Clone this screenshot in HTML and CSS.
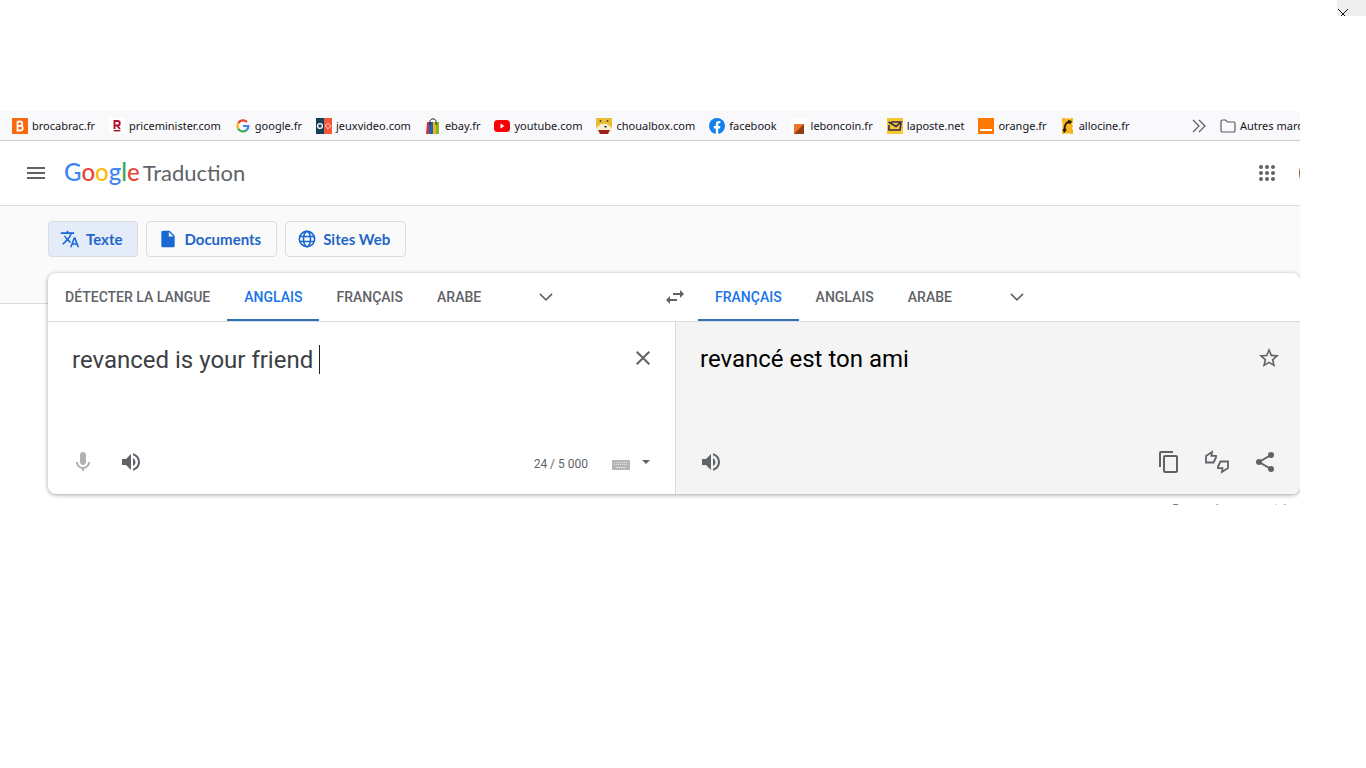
FILE: index.html
```html
<!DOCTYPE html>
<html lang="fr">
<head>
<meta charset="utf-8">
<title>Google Traduction</title>
<link rel="stylesheet" href="styles.css">
</head>
<body>
<button class="corner-close" aria-label="Fermer"><svg width="12" height="12" viewBox="0 0 12 12" fill="none" stroke="#111"><path d="M1 1l10 10M11 1L1 11"/></svg></button>
<div class="window">
  <nav class="bookmarks" aria-label="Marque-pages">
    <a href="#"><svg width="16" height="16" viewBox="0 0 16 16"><path fill="#f96a0e" d="M0 0h16v16H0z"/><path fill="none" stroke="#fff" stroke-width="1.8" d="M5.500 3.500v9h3a2.300 2.300 0 0 0 0-4.600h-3M5.500 3.500H8a2 2 0 0 1 0 4.400"/></svg>brocabrac.fr</a>
    <a href="#"><svg width="16" height="16" viewBox="0 0 16 16"><path fill="#fff" d="M0 0h16v16H0z"/><path fill="none" stroke="#b0102c" stroke-width="1.900" d="M5.500 11V3H8.500a2.200 2.200 0 0 1 0 4.500h-3M8 7.500l3 3.500"/><path fill="#b0102c" d="M4 12h8l-1.500 1.500h-5z"/></svg>priceminister.com</a>
    <a href="#"><svg width="16" height="16" viewBox="0 0 16 16" fill="none" stroke-width="2.200"><path stroke="#ea4335" d="M3.200 5.200A5.500 5.500 0 0 1 12 4"/><path stroke="#fbbc05" d="M3.200 5.200a5.500 5.500 0 0 0 0 5.600"/><path stroke="#34a853" d="M3.200 10.800a5.500 5.500 0 0 0 8.300 1.400"/><path stroke="#4285f4" d="M8 8h5.400a5.400 5.400 0 0 1-1.900 4.200"/></svg>google.fr</a>
    <a href="#"><svg width="16" height="16" viewBox="0 0 16 16"><path fill="#173f54" d="M0 0h8v16H0z"/><path fill="#f4573a" d="M8 0h8v16H8z"/><circle cx="4" cy="8" r="2.400" fill="none" stroke="#fff" stroke-width="1.300"/><path d="M12 5.200L14.800 8 12 10.800 9.200 8z" fill="none" stroke="#ffd5cd"/></svg>jeuxvideo.com</a>
    <a href="#"><svg width="16" height="16" viewBox="0 0 16 16"><path fill="#d63336" d="M2 4h3v12H1z"/><path fill="#1764bd" d="M4 4h4v12H4z"/><path fill="#f2b41b" d="M8 4h3v12H8z"/><path fill="#8ab320" d="M11 4h3v12h-3z"/><path d="M5 7V3.500C5 0 11 0 11 3.500V7" fill="none" stroke="#222"/></svg>ebay.fr</a>
    <a href="#"><svg width="16" height="16" viewBox="0 0 16 16"><rect y="2" width="16" height="12" rx="3.500" fill="#f40505"/><path fill="#fff" d="M6.500 5.500v5l4-2.500z"/></svg>youtube.com</a>
    <a href="#"><svg width="16" height="16" viewBox="0 0 16 16"><path fill="#e9bd37" d="M0 0h16v12H0z"/><circle cx="4.500" cy="3" r="1" fill="#5b4218"/><circle cx="11.500" cy="3" r="1" fill="#5b4218"/><path fill="#f9efcf" d="M0 10l5-4h6l5 4v3H0z"/><path fill="#222" d="M8 8h3l-1.500 2z"/><path fill="#9b2020" d="M2 12h12l-2 4H4z"/></svg>choualbox.com</a>
    <a href="#"><svg width="16" height="16" viewBox="0 0 16 16"><circle cx="8" cy="8" r="8" fill="#1281ee"/><path fill="#fff" d="M6.800 16v-5.500H4.800V8h2V6.300c0-2.200 1.200-3.300 3.100-3.300l1.500.2v2h-1c-1 0-1.200.6-1.200 1.200V8h2.200l-.4 2.500H9.200V16z"/></svg>facebook</a>
    <a href="#"><svg width="16" height="16" viewBox="0 0 16 16"><path fill="#fff" d="M0 0h16v16H0z"/><path fill="#ed762c" d="M3 6h10v10H3z"/><path fill="#8e4010" d="M13 6v10H3z"/></svg>leboncoin.fr</a>
    <a href="#"><svg width="16" height="16" viewBox="0 0 16 16"><path fill="#f5c82e" d="M0 0h16v16H0z"/><path fill="none" stroke="#342852" stroke-width="1.600" d="M1.500 4L9 8.500 14 4H4M2 7v5h11l1-7"/></svg>laposte.net</a>
    <a href="#"><svg width="16" height="16" viewBox="0 0 16 16"><path fill="#ff7900" d="M0 0h16v16H0z"/><path fill="#fff" d="M2 11h12v2H2z"/></svg>orange.fr</a>
    <a href="#"><svg width="14" height="16" viewBox="2 0 14 16"><path fill="#f4b51f" d="M3 0h3l1 1 2-1 1 1 2-1h2v4l-1 2 1 2-1 2 1 2v4h-3l-1-1-2 1-1-1-2 1H3v-4l1-2-1-2 1-2-1-2z"/><path d="M11 3.500C7 4 5 8 5.500 12.500" fill="none" stroke="#2a1a06" stroke-width="1.800"/><path d="M9 2l4 1-1.500 3-2-.5zM3.500 11l3.500-.5.500 2L5 15z" fill="#2a1a06"/></svg>allocine.fr</a>
    <button class="overflow" aria-label="Plus de marque-pages"><svg width="16" height="16" viewBox="0 0 16 16" fill="none" stroke="#5b5b66" stroke-width="1.200"><path d="M1 2l6 6-6 6M7 2l6 6-6 6"/></svg></button>
    <a class="others" href="#"><svg width="16" height="16" viewBox="0 0 16 16" fill="none" stroke="#5b5b66" stroke-width="1.200"><path d="M1 12.500v-9A1.500 1.500 0 0 1 2.500 2h3L7.500 4h6A1.500 1.500 0 0 1 15 5.500v7a1.500 1.500 0 0 1-1.500 1.500h-11A1.500 1.500 0 0 1 1 12.500z"/></svg>Autres marque-pages</a>
  </nav>
  <header class="header">
    <button class="icon" aria-label="Menu"><svg width="24" height="24" viewBox="0 0 24 24" fill="#5f6368"><path d="M3 18h18v-2H3zM3 13h18v-2H3zM3 6v2h18V6z"/></svg></button>
    <a class="brand" href="#"><span class="google"><span class="blue">G</span><span class="red">o</span><span class="yellow">o</span><span class="blue">g</span><span class="green">l</span><span class="red">e</span></span><span class="product">Traduction</span></a>
    <button class="icon apps" aria-label="Applications"><svg width="24" height="24" viewBox="0 0 24 24" fill="#5f6368"><circle cx="6" cy="6" r="2"/><circle cx="12" cy="6" r="2"/><circle cx="18" cy="6" r="2"/><circle cx="6" cy="12" r="2"/><circle cx="12" cy="12" r="2"/><circle cx="18" cy="12" r="2"/><circle cx="6" cy="18" r="2"/><circle cx="12" cy="18" r="2"/><circle cx="18" cy="18" r="2"/></svg></button>
    <button class="avatar" aria-label="Compte"></button>
  </header>
  <main>
    <div class="modes">
      <button class="chip active"><svg width="20" height="20" viewBox="0 0 24 24" fill="#1967d2"><path d="M12.870 15.070l-2.540-2.510.030-.030A17.520 17.520 0 0 0 14.070 6H17V4h-7V2H8v2H1v1.990h11.170C11.500 7.920 10.440 9.750 9 11.350 8.070 10.320 7.300 9.190 6.690 8h-2c.730 1.630 1.730 3.170 2.980 4.560l-5.090 5.020L4 19l5-5 3.110 3.110.760-2.040zM18.500 10h-2L12 22h2l1.120-3h4.750L21 22h2l-4.500-12zm-2.620 7l1.620-4.330L19.120 17h-3.240z"/></svg>Texte</button>
      <button class="chip"><svg width="20" height="20" viewBox="0 0 24 24" fill="#1967d2"><path d="M14 2H6c-1.100 0-2 .9-2 2v16c0 1.100.9 2 2 2h12c1.100 0 2-.9 2-2V8l-6-6zm-1 7V3.500L18.500 9H13z"/></svg>Documents</button>
      <button class="chip"><svg width="20" height="20" viewBox="0 0 24 24" fill="none" stroke="#1967d2" stroke-width="1.900"><circle cx="12" cy="12" r="9.200"/><ellipse cx="12" cy="12" rx="4.200" ry="9.200"/><path d="M3.500 9h17M3.500 15h17"/></svg>Sites Web</button>
    </div>
    <section class="card">
      <div class="pane source">
        <div class="langs">
          <button class="lang">DÉTECTER LA LANGUE</button><button class="lang on">ANGLAIS</button><button class="lang">FRANÇAIS</button><button class="lang">ARABE</button>
          <button class="icon more" aria-label="Plus de langues"><svg width="24" height="24" viewBox="0 0 24 24" fill="#5f6368"><path d="M5.410 7.590L4 9l8 8 8-8-1.410-1.410L12 14.170" transform="translate(2 2) scale(.83)"/></svg></button>
        </div>
        <div class="body">
          <div class="entry"><textarea rows="1" aria-label="Texte source" spellcheck="false">revanced is your friend </textarea><span class="caret"></span>
            <button class="icon end" aria-label="Effacer"><svg width="24" height="24" viewBox="0 0 24 24" fill="#5f6368"><path d="M19 6.410L17.590 5 12 10.590 6.410 5 5 6.410 10.590 12 5 17.590 6.410 19 12 13.410 17.590 19 19 17.590 13.410 12z"/></svg></button>
          </div>
          <div class="tools">
            <button class="icon" aria-label="Parler"><svg width="24" height="24" viewBox="0 0 24 24" fill="#b1b1b3"><path d="M12 15c1.660 0 3-1.340 3-3V5c0-1.660-1.340-3-3-3S9 3.340 9 5v7c0 1.660 1.340 3 3 3zm5-3c0 2.800-2.200 5-5 5s-5-2.200-5-5H5c0 3.500 2.600 6.300 6 6.900V21h2v-2.100c3.400-.6 6-3.400 6-6.900z"/></svg></button>
            <button class="icon" aria-label="Écouter"><svg width="24" height="24" viewBox="0 0 24 24" fill="#5f6368"><path d="M3 9v6h4l5 5V4L7 9zm13.500 3A4.500 4.500 0 0 0 14 7.970v8.050c1.480-.73 2.500-2.250 2.500-4.020zM14 3.230v2.060c2.890.86 5 3.540 5 6.710s-2.110 5.850-5 6.710v2.060c4.010-.91 7-4.490 7-8.770s-2.990-7.860-7-8.770z"/></svg></button>
            <span class="count">24 / 5 000</span>
            <button class="keyboard" aria-label="Clavier"><svg width="18" height="12" viewBox="0 0 18 12"><path fill="#b5b5b5" d="M0 1h18v10H0z"/><path stroke="#e4e4e4" stroke-dasharray="1 1" d="M2 3.500h14M2 5.500h14"/><path stroke="#ddd" d="M4 8.500h10"/></svg></button>
            <button class="drop" aria-label="Choisir un clavier"><svg width="8" height="8" viewBox="0 0 8 8"><path fill="#5f6368" d="M0 2h8L4 6z"/></svg></button>
          </div>
        </div>
      </div>
      <div class="pane target">
        <button class="icon swap" aria-label="Inverser les langues"><svg width="24" height="24" viewBox="0 0 24 24" fill="#5f6368"><path d="M6.990 11L3 15l3.990 4v-3H14v-2H6.990v-3zM21 9l-3.990-4v3H10v2h7.010v3L21 9z"/></svg></button>
        <div class="langs">
          <button class="lang on">FRANÇAIS</button><button class="lang">ANGLAIS</button><button class="lang">ARABE</button>
          <button class="icon more" aria-label="Plus de langues"><svg width="24" height="24" viewBox="0 0 24 24" fill="#5f6368"><path d="M5.410 7.590L4 9l8 8 8-8-1.410-1.410L12 14.170" transform="translate(2 2) scale(.83)"/></svg></button>
        </div>
        <div class="body">
          <div class="entry"><p class="result">revancé est ton ami</p>
            <button class="icon end" aria-label="Enregistrer"><svg width="24" height="24" viewBox="0 0 24 24" fill="#5f6368"><path d="M22 9.240l-7.190-.620L12 2 9.190 8.630 2 9.240l5.460 4.730L5.820 21 12 17.270 18.180 21l-1.630-7.030L22 9.240zM12 15.400l-3.760 2.270 1-4.280-3.320-2.880 4.380-.380L12 6.100l1.710 4.040 4.380.380-3.320 2.880 1 4.280L12 15.400z"/></svg></button>
          </div>
          <div class="tools">
            <button class="icon" aria-label="Écouter"><svg width="24" height="24" viewBox="0 0 24 24" fill="#5f6368"><path d="M3 9v6h4l5 5V4L7 9zm13.500 3A4.500 4.500 0 0 0 14 7.970v8.050c1.480-.73 2.500-2.250 2.500-4.020zM14 3.230v2.060c2.890.86 5 3.540 5 6.710s-2.110 5.850-5 6.710v2.060c4.010-.91 7-4.490 7-8.770s-2.990-7.860-7-8.770z"/></svg></button>
            <button class="icon end" aria-label="Copier"><svg width="24" height="24" viewBox="0 0 24 24" fill="#5f6368"><path d="M16 1H4c-1.100 0-2 .9-2 2v14h2V3h12V1zm3 4H8c-1.100 0-2 .9-2 2v14c0 1.100.9 2 2 2h11c1.100 0 2-.9 2-2V7c0-1.100-.9-2-2-2zm0 16H8V7h11v14z"/></svg></button>
            <button class="icon" aria-label="Évaluer la traduction"><svg width="26" height="26" viewBox="0 0 26 26" fill="none" stroke="#5f6368" stroke-width="1.800"><path d="M2 7v6.500h7.500l2.500-5V6.800H7.500L8 3zM24 19v-6.500h-7.500l-2.500 5v1.700h4.500L18 23z"/></svg></button>
            <button class="icon" aria-label="Partager"><svg width="24" height="24" viewBox="0 0 24 24" fill="#5f6368"><path d="M18 5L6 12l12 7" fill="none" stroke="#5f6368" stroke-width="2"/><circle cx="18" cy="5" r="3"/><circle cx="6" cy="12" r="3"/><circle cx="18" cy="19" r="3"/></svg></button>
          </div>
        </div>
      </div>
    </section>
    <div class="feedback"><a href="#">Envoyer des commentaires</a></div>
  </main>
</div>
</body>
</html>
```
FILE: styles.css
```css
* { box-sizing: border-box; }
body { margin: 0; background: #fff; font-family: Roboto, sans-serif; color: #3c4043; }
button { margin: 0; padding: 0; border: 0; background: none; font: inherit; color: inherit; }
a { color: inherit; text-decoration: none; }
svg { display: block; flex: none; }

.corner-close { position: absolute; top: 0; right: 0; width: 29px; height: 16px; padding: 8px 0 0; background: #eee; overflow: hidden; }
.window { margin: 111px 66px 0 0; overflow: hidden; }

.bookmarks { display: flex; align-items: center; gap: 14px; height: 30px; padding: 1px 0 0 12px; background: #f9f9fb; border-bottom: 1px solid #ccc; font: 11px/16px "Noto Sans", sans-serif; color: #15141a; white-space: nowrap; overflow: hidden; }
.bookmarks a { display: flex; align-items: center; gap: 4px; flex: none; }
.bookmarks .overflow { flex: none; margin-left: auto; }
.bookmarks .others { width: 80px; margin-left: -2px; overflow: hidden; }

.header { display: flex; align-items: center; height: 65px; padding-left: 24px; border-bottom: 1px solid #dadce0; overflow: hidden; }
.icon { display: flex; flex: none; align-items: center; justify-content: center; width: 24px; height: 24px; }
.brand { display: flex; align-items: baseline; gap: 3px; margin-left: 16px; padding-bottom: 2px; font: 24px/32px Lato, sans-serif; color: #5f6368; }
.product { font-size: 22px; }
.blue { color: #4285f4; }
.red { color: #ea4335; }
.yellow { color: #fbbc05; }
.green { color: #34a853; }
.google { font-weight: 500; }
.apps { margin-left: auto; }
.avatar { flex: none; width: 32px; height: 32px; margin: 0 -31px 0 20px; border-radius: 50%; background: #b0472e; }

.modes { display: flex; gap: 8px; height: 98px; padding: 15px 48px 0; background: #fafafa; border-bottom: 1px solid #dadce0; }
.chip { display: flex; align-items: center; gap: 6px; height: 36px; padding: 0 15px 0 11px; border: 1px solid #dadce0; border-radius: 4px; font: 700 15px/20px Lato, sans-serif; color: #1f66c7; }
.chip.active { background: #e4ecf9; }

.card { position: relative; display: grid; grid-template-columns: 628px 1fr; min-height: 221px; margin: -31px 0 0 48px; background: #fff; border-radius: 8px; box-shadow: 0 1px 4px rgba(0, 0, 0, .37); }
.pane { display: flex; flex-direction: column; min-width: 0; }
.target { position: relative; }
.langs { display: flex; height: 49px; border-bottom: 1px solid #dadce0; }
.target .langs { padding-left: 22px; }
.lang { padding: 2px 17px 0; border-bottom: 2px solid transparent; font-weight: 500; font-size: 14px; line-height: 20px; color: #5f6368; }
.lang.on { color: #1a73e8; border-color: #2f73b5; }
.more { height: 48px; margin-left: 36px; }
.swap { position: absolute; top: 12px; left: -13px; }
.body { display: flex; flex: 1; flex-direction: column; padding: 20px 20px 20px 24px; }
.source .body { border-right: 1px solid #dadce0; }
.target .body { padding-right: 19px; background: #f4f4f4; border-radius: 0 0 8px 0; }
.entry { display: flex; align-items: flex-start; font-size: 24px; line-height: 32px; }
.entry .icon { margin-top: 4px; }
.end { margin-left: auto; }
textarea { field-sizing: content; display: block; padding: 2px 0 0; border: 0; outline: 0; resize: none; background: none; font: inherit; color: #3c4043; white-space: pre; overflow: hidden; }
.caret { width: 1px; height: 29px; margin-top: 3px; background: #222; }
.result { margin: 0; padding-top: 1px; color: #000; }
.tools { display: flex; align-items: center; gap: 24px; height: 24px; margin-top: auto; }
.source .tools { padding-right: 5px; margin-left: -1px; }
.target .tools { padding-right: 4px; margin-left: -1px; }
.count { margin-left: auto; padding-top: 3px; font-size: 12px; line-height: 16px; color: #5f6368; }
.keyboard { padding-top: 5px; }
.drop { margin-left: -12px; }

.feedback { display: flex; justify-content: flex-end; height: 11px; padding-top: 7px; font: italic 11px/16px Roboto, sans-serif; color: #5f6368; overflow: hidden; }
```
